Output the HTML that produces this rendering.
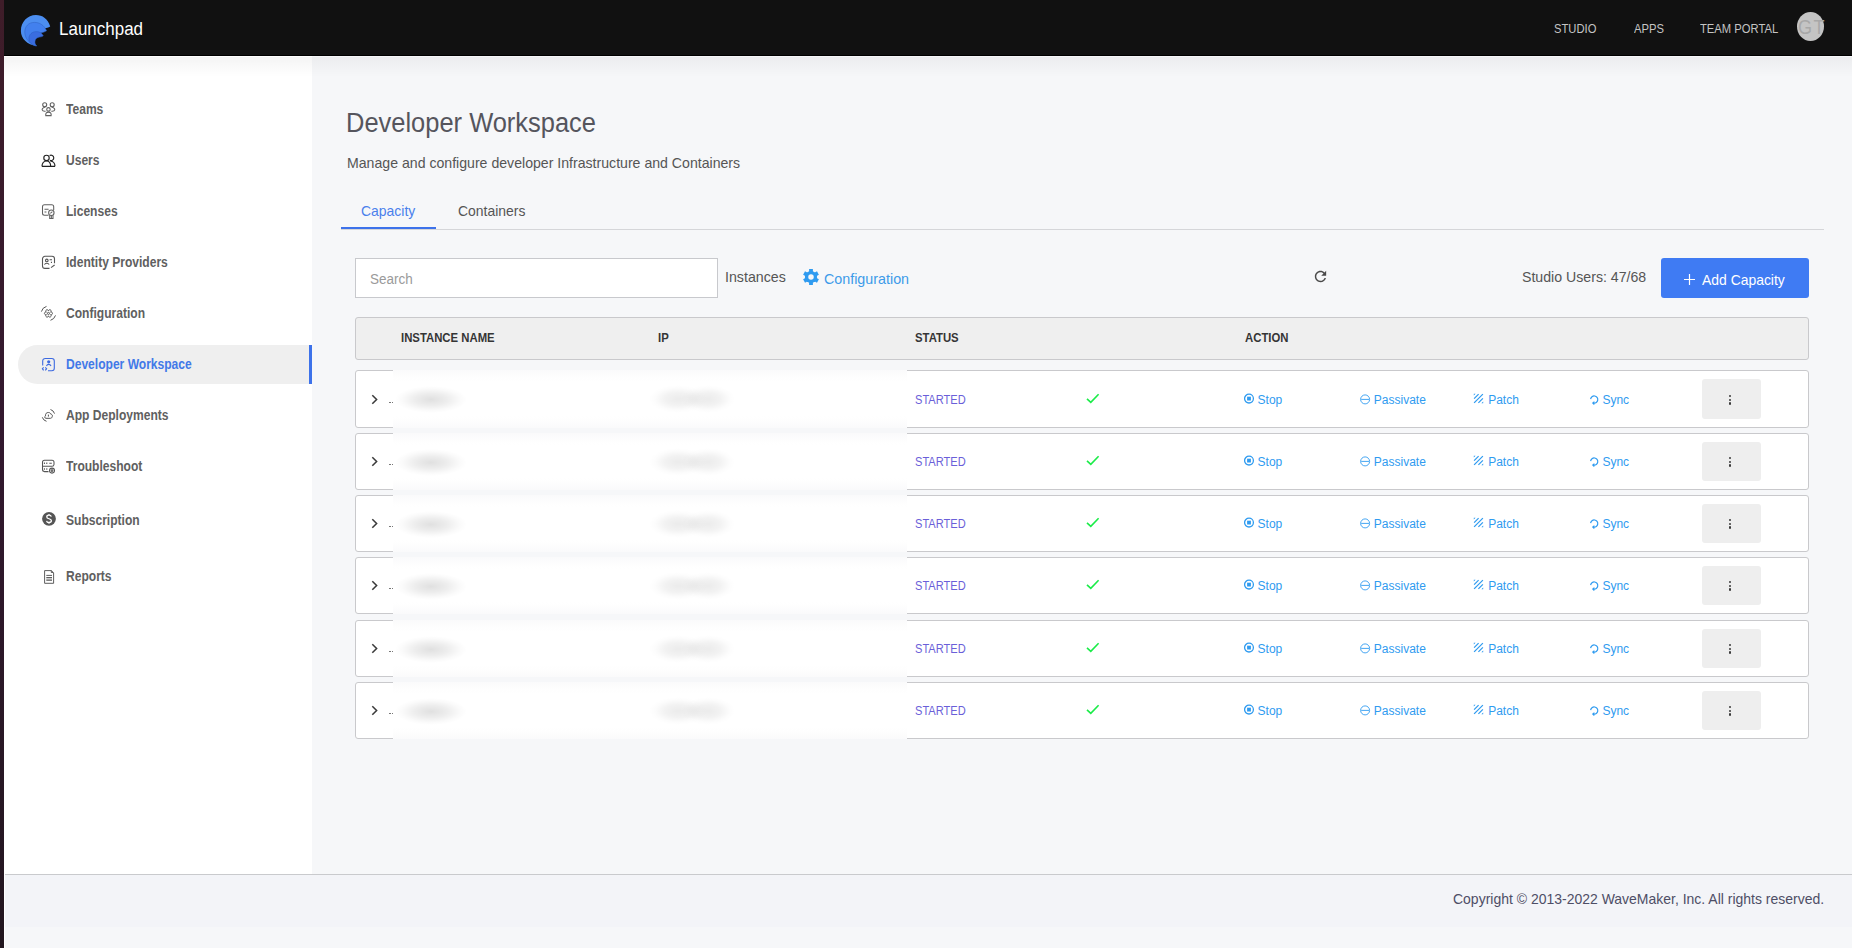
<!DOCTYPE html>
<html>
<head>
<meta charset="utf-8">
<style>
*{box-sizing:border-box;margin:0;padding:0}
html,body{width:1852px;height:948px;overflow:hidden}
body{position:relative;background:#f6f7f9;font-family:"Liberation Sans",sans-serif;color:#555}
.a{position:absolute;white-space:nowrap}
#strip{position:absolute;left:0;top:0;width:4px;height:948px;background:linear-gradient(#3f1d29,#33192f 45%,#22161f)}
#hdr{position:absolute;left:4px;top:0;width:1848px;height:56px;background:#111111;border-bottom:1px solid #000}
#side{position:absolute;left:4px;top:56px;width:308px;height:818px;background:#fff}
#shadow{position:absolute;left:4px;top:57px;width:1848px;height:20px;background:linear-gradient(rgba(0,0,0,0.045),rgba(0,0,0,0))}
#foot{position:absolute;left:5px;top:874px;width:1847px;height:53px;background:#f3f4f8;border-top:1px solid #c9cacd}
.nav{font-size:12px;line-height:12px;color:#c4c4c4;top:23px;transform:scaleX(0.935);transform-origin:0 0}
.mi{font-size:14px;line-height:14px;font-weight:bold;color:#606060;left:66px;transform:scaleX(0.861);transform-origin:0 0}
.ic{position:absolute;left:38px}
.row{position:absolute;left:355px;width:1454px;height:57px;background:#fff;border:1px solid #c9c9cc;border-radius:3px}
.row .in{position:absolute;left:0;width:100%;height:100%}
.row .chev{position:absolute;left:13.5px;top:22px}
.row .dd{position:absolute;left:33.3px;top:30.6px;width:1.4px;height:1.4px;background:#777}
.row .st{position:absolute;left:559px;top:22.7px;font-size:12px;line-height:12px;color:#6b5fd9;transform:scaleX(0.923);transform-origin:0 0}
.row .ck{position:absolute;left:730px;top:21.5px}
.row .act{position:absolute;top:23.0px;font-size:12px;line-height:12px;color:#2f9bf0}
.row .keb{position:absolute;left:1346px;top:8px;width:59px;height:40px;background:#eeeeee;border-radius:3px}
.row .keb i{position:absolute;left:27.3px;width:2.2px;height:2.2px;border-radius:50%;background:#3a3a3a}
.th{font-size:12px;line-height:12px;font-weight:bold;color:#353535;top:331.75px;transform:scaleX(0.945);transform-origin:0 0}
#ov{position:absolute;left:393px;top:370px;width:514px;height:369px;overflow:hidden}
.ovr{position:absolute;left:0;width:514px;background:linear-gradient(#fafafb,#fefefe 8px,#fff 12px,#fff calc(100% - 12px),#fefefe calc(100% - 8px),#fafafb)}
.ovr .bl{position:absolute;background:radial-gradient(closest-side,rgba(0,0,0,0.12),rgba(0,0,0,0.07) 45%,rgba(0,0,0,0.018) 80%,rgba(0,0,0,0))}
.ovr .b2{background:radial-gradient(closest-side,rgba(0,0,0,0.08),rgba(0,0,0,0.05) 45%,rgba(0,0,0,0.012) 80%,rgba(0,0,0,0))}
.bn{left:10px}
.bi{left:266px}
</style>
</head>
<body>
<div id="strip"></div>
<div id="hdr"></div>
<div id="side"></div>
<div id="shadow"></div>

<svg class="a" style="left:20px;top:14px" width="32" height="33" viewBox="0 0 32 33">
<path d="M30.2 12.4 C28 5 22.5 1.1 15.9 1.1 C7.5 1.1 0.9 8 0.9 16.9 C0.9 24.5 7 30.5 16.7 32 C10 27 8 17 15 15.3 C20 14 25 15.5 30.2 12.4 Z" fill="#4c8ef0"/>
<path d="M26.6 16.8 C24 11 19.5 8.4 14.3 8.4 C8.5 8.4 4.8 12.5 4.8 18 C4.8 24.5 9.5 30 16.7 32 C12 27.5 11.5 21 16.5 19.8 C20 19 23 19 26.6 16.8 Z" fill="#4280ee" stroke="#2c5fc0" stroke-width="0.5"/>
<path d="M23.3 21.8 C21.5 18.5 19 17.6 16.4 17.6 C12 17.6 8.9 20.5 8.9 24.5 C8.9 28.5 12 31.2 16.2 32 C14.2 29 14.5 24.3 18.3 23.4 C20 23 21.8 23 23.3 21.8 Z" fill="#3a6de0" stroke="#2c5fc0" stroke-width="0.5"/>
</svg>
<div class="a" style="left:59px;top:19.76px;font-size:18px;line-height:18px;color:#fff;transform:scaleX(0.943);transform-origin:0 0">Launchpad</div>
<div class="a nav" style="left:1554px">STUDIO</div>
<div class="a nav" style="left:1633.5px">APPS</div>
<div class="a nav" style="left:1700px">TEAM PORTAL</div>
<div class="a" style="left:1797px;top:12px;width:27px;height:29px;border-radius:50%;background:#c4c4c4"></div>
<div class="a" style="left:1797.7px;top:15.6px;font-size:21px;line-height:21px;color:#a8a8a8;letter-spacing:1.8px;transform:scaleX(0.86);transform-origin:0 0">GT</div>

<div class="a" style="left:18px;top:345px;width:294px;height:39px;background:#efefef;border-radius:20px 0 0 20px"></div>
<div class="a" style="left:309px;top:345px;width:3px;height:39px;background:#3d72ea"></div>
<svg class="ic" style="top:98px" width="22" height="22" viewBox="0 0 22 22"><g fill="none" stroke="#606060" stroke-width="1.1"><circle cx="6.7" cy="6.8" r="2"/><circle cx="14.2" cy="6.8" r="2"/><circle cx="10.45" cy="11.4" r="1.75"/><path d="M7.2 9.2 C4.8 9.6 3.9 10.8 4.2 11.9 C4.5 13 6 13.4 7.6 13.2"/><path d="M13.7 9.2 C16.1 9.6 17 10.8 16.7 11.9 C16.4 13 14.9 13.4 13.3 13.2"/><path d="M7.8 17.6 C7.4 15.4 8.4 14.1 10.45 14.1 C12.5 14.1 13.5 15.4 13.1 17.6 Z"/></g></svg><svg class="ic" style="top:150px" width="22" height="22" viewBox="0 0 22 22"><g fill="none" stroke="#222" stroke-width="1.15"><circle cx="8.5" cy="7.9" r="2.7"/><path d="M11.6 5.6 A2.7 2.7 0 1 1 11.9 10.3"/><path d="M4 16.3 C4 12.8 6 11 8.5 11 C11 11 12.6 12.8 12.7 16.3"/><path d="M12.3 11 C15 11.2 16.9 13 17 16.3 M3.9 16.3 H17"/></g></svg><svg class="ic" style="top:200px" width="22" height="22" viewBox="0 0 22 22"><g fill="none" stroke="#606060" stroke-width="1.05"><path d="M10.5 15.3 H6.5 A2 2 0 0 1 4.5 13.3 V6.7 A2 2 0 0 1 6.5 4.7 H13.7 A2 2 0 0 1 15.7 6.7 V10"/><path d="M6.5 9.3 H10.6 M6.5 12 H8.4"/><path d="M11.7 15.2 V18.4 H15 V15.2 M13.35 15.6 V18.4"/><circle cx="13.35" cy="12.7" r="2.7" fill="#fff"/><path d="M12.3 13.3 L14.4 11.7"/></g></svg><svg class="ic" style="top:251px" width="22" height="22" viewBox="0 0 22 22"><g fill="none" stroke="#555" stroke-width="1.1"><path d="M11.5 17.4 H7 A2.5 2.5 0 0 1 4.5 14.9 V7.8 A2.5 2.5 0 0 1 7 5.3 H14 A2.5 2.5 0 0 1 16.5 7.8 V12.3"/><circle cx="8.8" cy="9.4" r="1.3"/><path d="M6.5 13.6 C7.2 11.8 10.4 11.8 11.1 13.6"/><path d="M11.6 8.8 H14 M12.9 11.4 H14"/><path d="M13 16.6 L16.6 14"/></g></svg><svg class="ic" style="top:302px" width="22" height="22" viewBox="0 0 22 22"><g fill="none" stroke="#555" stroke-width="1"><path d="M12.57 10.18 A1.35 1.35 0 1 1 12.57 12.62 A1.35 1.35 0 1 1 10.45 13.85 A1.35 1.35 0 1 1 8.33 12.62 A1.35 1.35 0 1 1 8.33 10.18 A1.35 1.35 0 1 1 10.45 8.95 A1.35 1.35 0 1 1 12.57 10.17 Z"/><circle cx="10.45" cy="11.4" r="1.05"/><path d="M3.4 9.6 A7.3 7.3 0 0 1 8.5 4.4"/><path d="M17.5 13.4 A7.3 7.3 0 0 1 12.5 18.3"/></g></svg><svg class="ic" style="top:353px" width="22" height="22" viewBox="0 0 22 22"><g fill="none" stroke="#3d6ae0" stroke-width="1.1"><path d="M4.7 12.6 V8 A2.5 2.5 0 0 1 7.2 5.5 H13.8 A2.5 2.5 0 0 1 16.3 8 V15.3 A2.5 2.5 0 0 1 13.8 17.8 H10"/><path d="M8.5 13 C9.3 10.8 12.1 10.8 13 13"/></g><circle cx="10.7" cy="8.8" r="1.6" fill="#3d6ae0"/><path d="M5.6 14.3 L4.4 15.7 L5.6 17.3 M7.3 14.3 L8.6 15.7 L7.3 17.3" fill="none" stroke="#3d6ae0" stroke-width="1.1"/></svg><svg class="ic" style="top:404px" width="22" height="22" viewBox="0 0 22 22"><g fill="none" stroke="#555" stroke-width="1"><path d="M8 14.3 C6.5 14.3 6.3 12.3 7.5 11.9 C7.4 9.5 8.5 8.5 10.4 8.5 C11.8 8.5 12.6 9.3 12.8 10.2 C14.3 10.3 14.6 11.3 14.3 12.4 C14.1 13.6 13.3 14.3 12.5 14.3 Z"/><path d="M10.4 10.6 V12.6"/><path d="M12.5 5.5 A6 6 0 0 1 16.5 9.6"/><path d="M4.3 13.3 A6 6 0 0 0 8.5 17.3"/></g></svg><svg class="ic" style="top:455px" width="22" height="22" viewBox="0 0 22 22"><g fill="none" stroke="#555" stroke-width="1.05"><path d="M10.5 16.6 H6.5 A2 2 0 0 1 4.5 14.6 V7.3 A2 2 0 0 1 6.5 5.3 H14 A2 2 0 0 1 16 7.3 V9.5 A2 2 0 0 1 14 11.3 H4.5"/><path d="M6.4 7.6 V9 M8.8 7.6 V9 M11.3 8.3 H13.8 M6.4 13.3 V14.7 M8.8 13.3 V14.7"/><circle cx="14" cy="15.6" r="2.5"/><circle cx="14" cy="15.6" r="0.9"/></g></svg><svg class="ic" style="top:509px" width="22" height="22" viewBox="0 0 22 22"><circle cx="11" cy="9.85" r="6.9" fill="#555"/><path d="M13.3 7.6 C13 6.5 12.2 6.2 11 6.2 C9.6 6.2 8.8 6.9 8.8 7.9 C8.8 10.2 13.4 9.3 13.4 11.7 C13.4 12.8 12.5 13.5 11 13.5 C9.6 13.5 8.8 12.8 8.6 11.8 M11 4.9 V6.2 M11 13.5 V14.8" fill="none" stroke="#fff" stroke-width="1.3"/></svg><svg class="ic" style="top:565px" width="22" height="22" viewBox="0 0 22 22"><g fill="none" stroke="#555" stroke-width="0.95"><path d="M6.6 5.6 H13.3 L15.6 7.8 V18.3 H6.6 Z"/><path d="M13.3 5.6 V7.5 H15.3"/><path d="M8.3 10.4 H14 M8.3 12.5 H14 M8.3 15.3 H14"/></g><rect x="8.3" y="13.5" width="5.7" height="1.3" fill="#999"/></svg>
<div class="a mi" style="top:102.45px">Teams</div>
<div class="a mi" style="top:153.15px">Users</div>
<div class="a mi" style="top:203.85px">Licenses</div>
<div class="a mi" style="top:255.15px">Identity Providers</div>
<div class="a mi" style="top:306.15px">Configuration</div>
<div class="a mi" style="top:357.15px;color:#4279e8">Developer Workspace</div>
<div class="a mi" style="top:408.45px">App Deployments</div>
<div class="a mi" style="top:459.05px">Troubleshoot</div>
<div class="a mi" style="top:513.15px">Subscription</div>
<div class="a mi" style="top:568.65px">Reports</div>

<div class="a" style="left:345.5px;top:109.74px;font-size:27px;line-height:27px;color:#55555d;transform:scaleX(0.943);transform-origin:0 0">Developer Workspace</div>
<div class="a" style="left:347px;top:155.2px;font-size:15px;line-height:15px;color:#555;transform:scaleX(0.941);transform-origin:0 0">Manage and configure developer Infrastructure and Containers</div>
<div class="a" style="left:360.7px;top:203.2px;font-size:15px;line-height:15px;color:#4a80ec;transform:scaleX(0.929);transform-origin:0 0">Capacity</div>
<div class="a" style="left:457.7px;top:203.2px;font-size:15px;line-height:15px;color:#555;transform:scaleX(0.929);transform-origin:0 0">Containers</div>
<div class="a" style="left:341px;top:229px;width:1483px;height:1px;background:#d5d6d9"></div>
<div class="a" style="left:341px;top:227px;width:95px;height:2px;background:#3d72ea"></div>

<div class="a" style="left:355px;top:258px;width:363px;height:40px;background:#fff;border:1px solid #c8c9cd"></div>
<div class="a" style="left:370px;top:272.15px;font-size:14px;line-height:14px;color:#9a9a9a;transform:scaleX(0.963);transform-origin:0 0">Search</div>
<div class="a" style="left:725px;top:269.0px;font-size:15px;line-height:15px;color:#555;transform:scaleX(0.947);transform-origin:0 0">Instances</div>
<svg class="a" style="left:803px;top:268.8px" width="16" height="16" viewBox="-8 -8 16 16"><g fill="#2f9bf0"><circle r="6.1"/><rect x="-1.9" y="-8" width="3.8" height="4" transform="rotate(0)"/><rect x="-1.9" y="-8" width="3.8" height="4" transform="rotate(60)"/><rect x="-1.9" y="-8" width="3.8" height="4" transform="rotate(120)"/><rect x="-1.9" y="-8" width="3.8" height="4" transform="rotate(180)"/><rect x="-1.9" y="-8" width="3.8" height="4" transform="rotate(240)"/><rect x="-1.9" y="-8" width="3.8" height="4" transform="rotate(300)"/></g><circle r="2.75" fill="#f6f7f9"/></svg>
<div class="a" style="left:823.5px;top:271.1px;font-size:15px;line-height:15px;color:#3d9be9;transform:scaleX(0.953);transform-origin:0 0">Configuration</div>
<svg class="a" style="left:1311.7px;top:268.4px" width="17" height="17" viewBox="0 0 24 24"><path fill="#4a4a4a" d="M17.65 6.35C16.2 4.9 14.21 4 12 4c-4.42 0-7.99 3.58-7.99 8s3.57 8 7.99 8c3.73 0 6.84-2.55 7.73-6h-2.08c-.82 2.33-3.04 4-5.65 4-3.31 0-6-2.69-6-6s2.69-6 6-6c1.66 0 3.14.69 4.22 1.78L13 11h7V4l-2.35 2.35z"/></svg>
<div class="a" style="left:1521.5px;top:269.1px;font-size:15px;line-height:15px;color:#555;transform:scaleX(0.943);transform-origin:0 0">Studio Users: 47/68</div>
<div class="a" style="left:1661px;top:258px;width:148px;height:40px;background:#3f7bf3;border-radius:3px"></div>
<svg class="a" style="left:1683px;top:272.5px" width="13" height="13" viewBox="0 0 13 13"><path d="M6.5 1 V12 M1 6.5 H12" stroke="#fff" stroke-width="1.2"/></svg>
<div class="a" style="left:1702px;top:271.6px;font-size:15px;line-height:15px;color:#fff;transform:scaleX(0.928);transform-origin:0 0">Add Capacity</div>

<div class="a" style="left:355px;top:317px;width:1454px;height:43px;background:#efefef;border:1px solid #c9c9cc;border-radius:3px"></div>
<div class="a th" style="left:400.5px">INSTANCE NAME</div>
<div class="a th" style="left:657.5px">IP</div>
<div class="a th" style="left:915px">STATUS</div>
<div class="a th" style="left:1244.5px">ACTION</div>

<div class="row" style="top:370.00px;height:58px">
<div class="in" style="top:0px">
<svg class="chev" width="10" height="14" viewBox="0 0 10 14"><path d="M2.3 2.2 L6.6 6.5 L2.3 10.8" fill="none" stroke="#3a3a3a" stroke-width="1.55"/></svg>
<div class="dd"></div><div class="dd" style="left:36px"></div>
<div class="st">STARTED</div>
<svg class="ck" width="15" height="12" viewBox="0 0 15 12"><path d="M1 5.8 L4.8 9.4 L12.6 1.2" fill="none" stroke="#1aec48" stroke-width="1.6"/></svg>
<div class="act" style="left:901.6px"><svg width="12" height="12" viewBox="0 0 12 12" style="position:absolute;left:-14px;top:-0.6px"><circle cx="5" cy="5.6" r="4.4" fill="none" stroke="#2f9bf0" stroke-width="1.3"/><rect x="3.1" y="3.7" width="3.8" height="3.8" fill="#2f9bf0"/></svg>Stop</div>
<div class="act" style="left:1017.8px"><svg width="12" height="12" viewBox="0 0 12 12" style="position:absolute;left:-15px;top:-0.6px"><circle cx="6.1" cy="6.4" r="4.5" fill="none" stroke="#2f9bf0" stroke-width="0.9"/><path d="M2.2 6.4 H10" stroke="#2f9bf0" stroke-width="0.9"/></svg>Passivate</div>
<div class="act" style="left:1132.2px"><svg width="12" height="12" viewBox="0 0 12 12" style="position:absolute;left:-15px;top:-0.6px"><g stroke="#2f9bf0" stroke-width="1.25" fill="none"><path d="M1.1 5.6 L5.6 1.1"/><path d="M1.1 9.9 L9.9 1.1"/><path d="M5.4 9.9 L9.9 5.4"/></g><path d="M0.8 0.8 H2.6 L0.8 2.6Z M10.2 10.2 H8.4 L10.2 8.4Z" fill="#2f9bf0"/></svg>Patch</div>
<div class="act" style="left:1246.4px"><svg width="12" height="12" viewBox="0 0 12 12" style="position:absolute;left:-14px;top:-0.6px"><path d="M2.6 6.1 A3.6 3.6 0 1 1 5.6 10.1" fill="none" stroke="#2f9bf0" stroke-width="1.2"/><path d="M3.9 10.1 L6.3 7.9 L6.3 12.3 Z" fill="#2f9bf0"/></svg>Sync</div>
</div>
<div class="keb" style="height:40px"><i style="top:15.8px"></i><i style="top:19.7px"></i><i style="top:23.4px"></i></div>
</div>
<div class="row" style="top:433.00px;height:57px">
<div class="in" style="top:-1px">
<svg class="chev" width="10" height="14" viewBox="0 0 10 14"><path d="M2.3 2.2 L6.6 6.5 L2.3 10.8" fill="none" stroke="#3a3a3a" stroke-width="1.55"/></svg>
<div class="dd"></div><div class="dd" style="left:36px"></div>
<div class="st">STARTED</div>
<svg class="ck" width="15" height="12" viewBox="0 0 15 12"><path d="M1 5.8 L4.8 9.4 L12.6 1.2" fill="none" stroke="#1aec48" stroke-width="1.6"/></svg>
<div class="act" style="left:901.6px"><svg width="12" height="12" viewBox="0 0 12 12" style="position:absolute;left:-14px;top:-0.6px"><circle cx="5" cy="5.6" r="4.4" fill="none" stroke="#2f9bf0" stroke-width="1.3"/><rect x="3.1" y="3.7" width="3.8" height="3.8" fill="#2f9bf0"/></svg>Stop</div>
<div class="act" style="left:1017.8px"><svg width="12" height="12" viewBox="0 0 12 12" style="position:absolute;left:-15px;top:-0.6px"><circle cx="6.1" cy="6.4" r="4.5" fill="none" stroke="#2f9bf0" stroke-width="0.9"/><path d="M2.2 6.4 H10" stroke="#2f9bf0" stroke-width="0.9"/></svg>Passivate</div>
<div class="act" style="left:1132.2px"><svg width="12" height="12" viewBox="0 0 12 12" style="position:absolute;left:-15px;top:-0.6px"><g stroke="#2f9bf0" stroke-width="1.25" fill="none"><path d="M1.1 5.6 L5.6 1.1"/><path d="M1.1 9.9 L9.9 1.1"/><path d="M5.4 9.9 L9.9 5.4"/></g><path d="M0.8 0.8 H2.6 L0.8 2.6Z M10.2 10.2 H8.4 L10.2 8.4Z" fill="#2f9bf0"/></svg>Patch</div>
<div class="act" style="left:1246.4px"><svg width="12" height="12" viewBox="0 0 12 12" style="position:absolute;left:-14px;top:-0.6px"><path d="M2.6 6.1 A3.6 3.6 0 1 1 5.6 10.1" fill="none" stroke="#2f9bf0" stroke-width="1.2"/><path d="M3.9 10.1 L6.3 7.9 L6.3 12.3 Z" fill="#2f9bf0"/></svg>Sync</div>
</div>
<div class="keb" style="height:39px"><i style="top:14.8px"></i><i style="top:18.7px"></i><i style="top:22.4px"></i></div>
</div>
<div class="row" style="top:495.00px;height:57px">
<div class="in" style="top:-1px">
<svg class="chev" width="10" height="14" viewBox="0 0 10 14"><path d="M2.3 2.2 L6.6 6.5 L2.3 10.8" fill="none" stroke="#3a3a3a" stroke-width="1.55"/></svg>
<div class="dd"></div><div class="dd" style="left:36px"></div>
<div class="st">STARTED</div>
<svg class="ck" width="15" height="12" viewBox="0 0 15 12"><path d="M1 5.8 L4.8 9.4 L12.6 1.2" fill="none" stroke="#1aec48" stroke-width="1.6"/></svg>
<div class="act" style="left:901.6px"><svg width="12" height="12" viewBox="0 0 12 12" style="position:absolute;left:-14px;top:-0.6px"><circle cx="5" cy="5.6" r="4.4" fill="none" stroke="#2f9bf0" stroke-width="1.3"/><rect x="3.1" y="3.7" width="3.8" height="3.8" fill="#2f9bf0"/></svg>Stop</div>
<div class="act" style="left:1017.8px"><svg width="12" height="12" viewBox="0 0 12 12" style="position:absolute;left:-15px;top:-0.6px"><circle cx="6.1" cy="6.4" r="4.5" fill="none" stroke="#2f9bf0" stroke-width="0.9"/><path d="M2.2 6.4 H10" stroke="#2f9bf0" stroke-width="0.9"/></svg>Passivate</div>
<div class="act" style="left:1132.2px"><svg width="12" height="12" viewBox="0 0 12 12" style="position:absolute;left:-15px;top:-0.6px"><g stroke="#2f9bf0" stroke-width="1.25" fill="none"><path d="M1.1 5.6 L5.6 1.1"/><path d="M1.1 9.9 L9.9 1.1"/><path d="M5.4 9.9 L9.9 5.4"/></g><path d="M0.8 0.8 H2.6 L0.8 2.6Z M10.2 10.2 H8.4 L10.2 8.4Z" fill="#2f9bf0"/></svg>Patch</div>
<div class="act" style="left:1246.4px"><svg width="12" height="12" viewBox="0 0 12 12" style="position:absolute;left:-14px;top:-0.6px"><path d="M2.6 6.1 A3.6 3.6 0 1 1 5.6 10.1" fill="none" stroke="#2f9bf0" stroke-width="1.2"/><path d="M3.9 10.1 L6.3 7.9 L6.3 12.3 Z" fill="#2f9bf0"/></svg>Sync</div>
</div>
<div class="keb" style="height:39px"><i style="top:14.8px"></i><i style="top:18.7px"></i><i style="top:22.4px"></i></div>
</div>
<div class="row" style="top:557.00px;height:57px">
<div class="in" style="top:-1px">
<svg class="chev" width="10" height="14" viewBox="0 0 10 14"><path d="M2.3 2.2 L6.6 6.5 L2.3 10.8" fill="none" stroke="#3a3a3a" stroke-width="1.55"/></svg>
<div class="dd"></div><div class="dd" style="left:36px"></div>
<div class="st">STARTED</div>
<svg class="ck" width="15" height="12" viewBox="0 0 15 12"><path d="M1 5.8 L4.8 9.4 L12.6 1.2" fill="none" stroke="#1aec48" stroke-width="1.6"/></svg>
<div class="act" style="left:901.6px"><svg width="12" height="12" viewBox="0 0 12 12" style="position:absolute;left:-14px;top:-0.6px"><circle cx="5" cy="5.6" r="4.4" fill="none" stroke="#2f9bf0" stroke-width="1.3"/><rect x="3.1" y="3.7" width="3.8" height="3.8" fill="#2f9bf0"/></svg>Stop</div>
<div class="act" style="left:1017.8px"><svg width="12" height="12" viewBox="0 0 12 12" style="position:absolute;left:-15px;top:-0.6px"><circle cx="6.1" cy="6.4" r="4.5" fill="none" stroke="#2f9bf0" stroke-width="0.9"/><path d="M2.2 6.4 H10" stroke="#2f9bf0" stroke-width="0.9"/></svg>Passivate</div>
<div class="act" style="left:1132.2px"><svg width="12" height="12" viewBox="0 0 12 12" style="position:absolute;left:-15px;top:-0.6px"><g stroke="#2f9bf0" stroke-width="1.25" fill="none"><path d="M1.1 5.6 L5.6 1.1"/><path d="M1.1 9.9 L9.9 1.1"/><path d="M5.4 9.9 L9.9 5.4"/></g><path d="M0.8 0.8 H2.6 L0.8 2.6Z M10.2 10.2 H8.4 L10.2 8.4Z" fill="#2f9bf0"/></svg>Patch</div>
<div class="act" style="left:1246.4px"><svg width="12" height="12" viewBox="0 0 12 12" style="position:absolute;left:-14px;top:-0.6px"><path d="M2.6 6.1 A3.6 3.6 0 1 1 5.6 10.1" fill="none" stroke="#2f9bf0" stroke-width="1.2"/><path d="M3.9 10.1 L6.3 7.9 L6.3 12.3 Z" fill="#2f9bf0"/></svg>Sync</div>
</div>
<div class="keb" style="height:39px"><i style="top:14.8px"></i><i style="top:18.7px"></i><i style="top:22.4px"></i></div>
</div>
<div class="row" style="top:620.00px;height:57px">
<div class="in" style="top:-1px">
<svg class="chev" width="10" height="14" viewBox="0 0 10 14"><path d="M2.3 2.2 L6.6 6.5 L2.3 10.8" fill="none" stroke="#3a3a3a" stroke-width="1.55"/></svg>
<div class="dd"></div><div class="dd" style="left:36px"></div>
<div class="st">STARTED</div>
<svg class="ck" width="15" height="12" viewBox="0 0 15 12"><path d="M1 5.8 L4.8 9.4 L12.6 1.2" fill="none" stroke="#1aec48" stroke-width="1.6"/></svg>
<div class="act" style="left:901.6px"><svg width="12" height="12" viewBox="0 0 12 12" style="position:absolute;left:-14px;top:-0.6px"><circle cx="5" cy="5.6" r="4.4" fill="none" stroke="#2f9bf0" stroke-width="1.3"/><rect x="3.1" y="3.7" width="3.8" height="3.8" fill="#2f9bf0"/></svg>Stop</div>
<div class="act" style="left:1017.8px"><svg width="12" height="12" viewBox="0 0 12 12" style="position:absolute;left:-15px;top:-0.6px"><circle cx="6.1" cy="6.4" r="4.5" fill="none" stroke="#2f9bf0" stroke-width="0.9"/><path d="M2.2 6.4 H10" stroke="#2f9bf0" stroke-width="0.9"/></svg>Passivate</div>
<div class="act" style="left:1132.2px"><svg width="12" height="12" viewBox="0 0 12 12" style="position:absolute;left:-15px;top:-0.6px"><g stroke="#2f9bf0" stroke-width="1.25" fill="none"><path d="M1.1 5.6 L5.6 1.1"/><path d="M1.1 9.9 L9.9 1.1"/><path d="M5.4 9.9 L9.9 5.4"/></g><path d="M0.8 0.8 H2.6 L0.8 2.6Z M10.2 10.2 H8.4 L10.2 8.4Z" fill="#2f9bf0"/></svg>Patch</div>
<div class="act" style="left:1246.4px"><svg width="12" height="12" viewBox="0 0 12 12" style="position:absolute;left:-14px;top:-0.6px"><path d="M2.6 6.1 A3.6 3.6 0 1 1 5.6 10.1" fill="none" stroke="#2f9bf0" stroke-width="1.2"/><path d="M3.9 10.1 L6.3 7.9 L6.3 12.3 Z" fill="#2f9bf0"/></svg>Sync</div>
</div>
<div class="keb" style="height:39px"><i style="top:14.8px"></i><i style="top:18.7px"></i><i style="top:22.4px"></i></div>
</div>
<div class="row" style="top:682.00px;height:57px">
<div class="in" style="top:-1px">
<svg class="chev" width="10" height="14" viewBox="0 0 10 14"><path d="M2.3 2.2 L6.6 6.5 L2.3 10.8" fill="none" stroke="#3a3a3a" stroke-width="1.55"/></svg>
<div class="dd"></div><div class="dd" style="left:36px"></div>
<div class="st">STARTED</div>
<svg class="ck" width="15" height="12" viewBox="0 0 15 12"><path d="M1 5.8 L4.8 9.4 L12.6 1.2" fill="none" stroke="#1aec48" stroke-width="1.6"/></svg>
<div class="act" style="left:901.6px"><svg width="12" height="12" viewBox="0 0 12 12" style="position:absolute;left:-14px;top:-0.6px"><circle cx="5" cy="5.6" r="4.4" fill="none" stroke="#2f9bf0" stroke-width="1.3"/><rect x="3.1" y="3.7" width="3.8" height="3.8" fill="#2f9bf0"/></svg>Stop</div>
<div class="act" style="left:1017.8px"><svg width="12" height="12" viewBox="0 0 12 12" style="position:absolute;left:-15px;top:-0.6px"><circle cx="6.1" cy="6.4" r="4.5" fill="none" stroke="#2f9bf0" stroke-width="0.9"/><path d="M2.2 6.4 H10" stroke="#2f9bf0" stroke-width="0.9"/></svg>Passivate</div>
<div class="act" style="left:1132.2px"><svg width="12" height="12" viewBox="0 0 12 12" style="position:absolute;left:-15px;top:-0.6px"><g stroke="#2f9bf0" stroke-width="1.25" fill="none"><path d="M1.1 5.6 L5.6 1.1"/><path d="M1.1 9.9 L9.9 1.1"/><path d="M5.4 9.9 L9.9 5.4"/></g><path d="M0.8 0.8 H2.6 L0.8 2.6Z M10.2 10.2 H8.4 L10.2 8.4Z" fill="#2f9bf0"/></svg>Patch</div>
<div class="act" style="left:1246.4px"><svg width="12" height="12" viewBox="0 0 12 12" style="position:absolute;left:-14px;top:-0.6px"><path d="M2.6 6.1 A3.6 3.6 0 1 1 5.6 10.1" fill="none" stroke="#2f9bf0" stroke-width="1.2"/><path d="M3.9 10.1 L6.3 7.9 L6.3 12.3 Z" fill="#2f9bf0"/></svg>Sync</div>
</div>
<div class="keb" style="height:39px"><i style="top:14.8px"></i><i style="top:18.7px"></i><i style="top:22.4px"></i></div>
</div>
<div id="ov">
<div class="ovr" style="top:0.00px;height:58px"><i class="bl" style="left:2px;top:16px;width:72px;height:27px"></i><i class="bl b2" style="left:256px;top:15px;width:58px;height:28px"></i><i class="bl b2" style="left:288px;top:15px;width:54px;height:28px"></i></div>
<div class="ovr" style="top:63.00px;height:57px"><i class="bl" style="left:2px;top:16px;width:72px;height:27px"></i><i class="bl b2" style="left:256px;top:15px;width:58px;height:28px"></i><i class="bl b2" style="left:288px;top:15px;width:54px;height:28px"></i></div>
<div class="ovr" style="top:125.00px;height:57px"><i class="bl" style="left:2px;top:16px;width:72px;height:27px"></i><i class="bl b2" style="left:256px;top:15px;width:58px;height:28px"></i><i class="bl b2" style="left:288px;top:15px;width:54px;height:28px"></i></div>
<div class="ovr" style="top:187.00px;height:57px"><i class="bl" style="left:2px;top:16px;width:72px;height:27px"></i><i class="bl b2" style="left:256px;top:15px;width:58px;height:28px"></i><i class="bl b2" style="left:288px;top:15px;width:54px;height:28px"></i></div>
<div class="ovr" style="top:250.00px;height:57px"><i class="bl" style="left:2px;top:16px;width:72px;height:27px"></i><i class="bl b2" style="left:256px;top:15px;width:58px;height:28px"></i><i class="bl b2" style="left:288px;top:15px;width:54px;height:28px"></i></div>
<div class="ovr" style="top:312.00px;height:57px"><i class="bl" style="left:2px;top:16px;width:72px;height:27px"></i><i class="bl b2" style="left:256px;top:15px;width:58px;height:28px"></i><i class="bl b2" style="left:288px;top:15px;width:54px;height:28px"></i></div>
</div>

<div id="foot"></div>
<div class="a" style="left:4px;top:874px;width:1px;height:74px;background:#fff"></div>
<div class="a" style="left:1452.5px;top:891.1px;font-size:15px;line-height:15px;color:#4e4e66;transform:scaleX(0.932);transform-origin:0 0">Copyright © 2013-2022 WaveMaker, Inc. All rights reserved.</div>
</body>
</html>
